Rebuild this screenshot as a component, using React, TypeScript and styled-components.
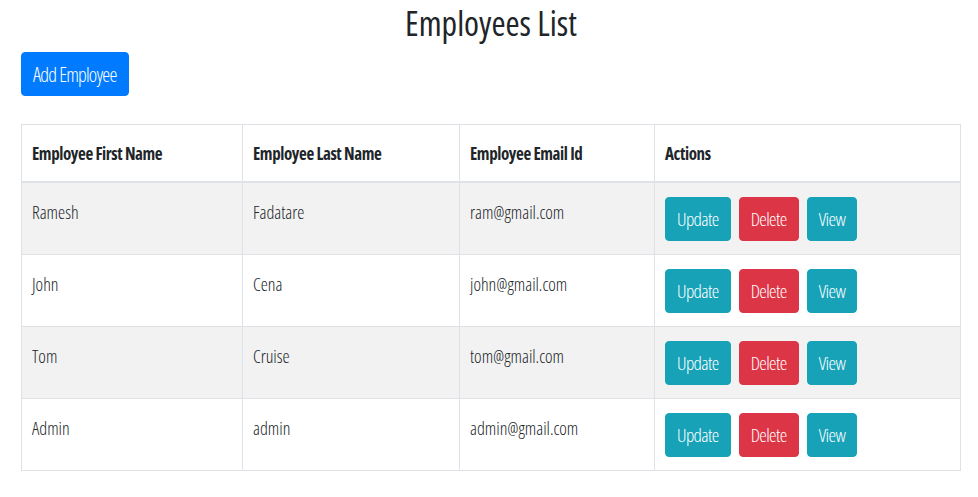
import styled, { createGlobalStyle } from "styled-components";

const GlobalStyle = createGlobalStyle`
  body {
    margin: 0;
    background: #fff;
    color: #212529;
    font-family: "Open Sans", "Noto Sans", sans-serif;
    font-stretch: 75%;
  }
`;

const Page = styled.div`
  width: 940px;
  margin-left: 21px;
  display: flex;
  flex-direction: column;
  align-items: flex-start;
`;

const Title = styled.h2`
  align-self: stretch;
  margin: 3px 0 0;
  text-align: center;
  font-size: 34px;
  font-weight: 400;
  line-height: 41px;
`;

const Toolbar = styled.div`
  margin-top: 8px;
  margin-bottom: 28px;
`;

type Variant = "primary" | "info" | "danger";
const colors: Record<Variant, string> = {
  primary: "#007bff",
  info: "#17a2b8",
  danger: "#dc3545",
};

const Button = styled.button<{ $variant: Variant }>`
  height: 44px;
  padding: 1px 11px 0;
  border: 1px solid ${(p) => colors[p.$variant]};
  border-radius: 4px;
  background: ${(p) => colors[p.$variant]};
  color: #fff;
  font-family: inherit;
  font-stretch: 75%;
  font-size: 19px;
  font-weight: 300;
  letter-spacing: -0.6px;
  line-height: 1;
  cursor: pointer;
`;

const AddButton = styled(Button)`
  font-size: 20px;
  letter-spacing: -0.8px;
`;

const Table = styled.table`
  width: 940px;
  border-collapse: collapse;
  table-layout: fixed;
  border: 1px solid #dee2e6;
`;

const HeadCell = styled.th`
  text-align: left;
  font-size: 17px;
  font-weight: 700;
  letter-spacing: -0.4px;
  padding: 16px 10px 14px;
  line-height: 26px;
  border: 1px solid #dee2e6;
  border-bottom: 2px solid #dee2e6;
`;

const Row = styled.tr<{ $striped: boolean }>`
  background: ${(p) => (p.$striped ? "#f2f2f2" : "#fff")};
`;

const Cell = styled.td`
  vertical-align: top;
  padding: 14px 10px 13px;
  font-size: 18px;
  line-height: 30px;
  font-weight: 300;
  border: 1px solid #dee2e6;
`;

const Actions = styled.div`
  display: flex;
  gap: 8px;
`;

const employees = [
  { first: "Ramesh", last: "Fadatare", email: "ram@gmail.com" },
  { first: "John", last: "Cena", email: "john@gmail.com" },
  { first: "Tom", last: "Cruise", email: "tom@gmail.com" },
  { first: "Admin", last: "admin", email: "admin@gmail.com" },
];

export default function App() {
  return (
    <>
      <GlobalStyle />
      <Page>
        <Title>Employees List</Title>
        <Toolbar>
          <AddButton $variant="primary">Add Employee</AddButton>
        </Toolbar>
        <Table>
          <colgroup>
            <col style={{ width: 221 }} />
            <col style={{ width: 217 }} />
            <col style={{ width: 195 }} />
            <col />
          </colgroup>
          <thead>
            <tr>
              <HeadCell>Employee First Name</HeadCell>
              <HeadCell>Employee Last Name</HeadCell>
              <HeadCell>Employee Email Id</HeadCell>
              <HeadCell>Actions</HeadCell>
            </tr>
          </thead>
          <tbody>
            {employees.map((e, i) => (
              <Row key={e.email} $striped={i % 2 === 0}>
                <Cell>{e.first}</Cell>
                <Cell>{e.last}</Cell>
                <Cell>{e.email}</Cell>
                <Cell>
                  <Actions>
                    <Button $variant="info">Update</Button>
                    <Button $variant="danger">Delete</Button>
                    <Button $variant="info">View</Button>
                  </Actions>
                </Cell>
              </Row>
            ))}
          </tbody>
        </Table>
      </Page>
    </>
  );
}
